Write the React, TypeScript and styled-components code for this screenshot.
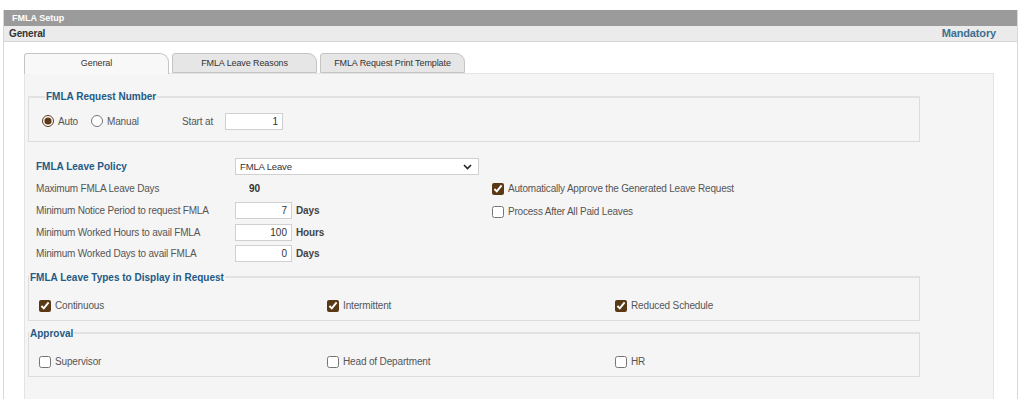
import React from 'react';
import styled, { createGlobalStyle } from 'styled-components';

const GlobalStyle = createGlobalStyle`
  body {
    margin: 0;
    background: #fff;
    font-family: "Liberation Sans", Arial, sans-serif;
    font-size: 10px;
    letter-spacing: -0.15px;
    color: #555;
  }
`;

const Page = styled.div`
  padding-top: 10px;
  height: 389px;
  overflow: hidden;
`;

const Frame = styled.div`
  margin-left: 3px;
  width: 1013px;
  height: 100%;
  border-left: 1px solid #d8d8d8;
  border-right: 1px solid #d8d8d8;
`;

const HeaderBar = styled.div`
  height: 16px;
  line-height: 16px;
  background: #9b9b9b;
  color: #fff;
  font-weight: bold;
  font-size: 9px;
  letter-spacing: 0;
  padding-left: 8px;
`;

const SubBar = styled.div`
  display: flex;
  justify-content: space-between;
  height: 15px;
  line-height: 15px;
  background: #ebebeb;
  border-bottom: 1px solid #d6d6d6;
  padding: 0 21px 0 5px;
  font-weight: bold;
  font-size: 10px;
  color: #333;
`;

const Mandatory = styled.span`
  color: #3d6f92;
  font-size: 11px;
`;

const Body = styled.div`
  padding: 11px 0 0 20px;
`;

const Tabs = styled.div`
  display: flex;
  gap: 3px;
  height: 20px;
`;

const Tab = styled.div<{ $active?: boolean }>`
  width: 143px;
  height: ${(p) => (p.$active ? '20px' : '18px')};
  line-height: 18px;
  text-align: center;
  font-size: 9px;
  letter-spacing: -0.1px;
  color: #333;
  background: ${(p) => (p.$active ? '#f8f8f8' : '#e6e6e6')};
  border: 1px solid #c4c4c4;
  border-bottom: ${(p) => (p.$active ? 'none' : '1px solid #c4c4c4')};
  border-radius: 3px 9px 0 0;
  position: relative;
  z-index: 1;
`;

const Panel = styled.div`
  width: 970px;
  height: 330px;
  background: #f5f5f5;
  border: 1px solid #e4e4e4;
  padding: 17px 0 0 3px;
  box-sizing: border-box;
`;

const Fieldset = styled.fieldset<{ $inset?: boolean }>`
  width: 892px;
  box-sizing: border-box;
  margin: 0;
  border: 1px solid #dcdcdc;
  border-top: 2px solid #e2e2e2;
  padding: ${(p) => (p.$inset ? '9px 10px 10px' : '9px 10px 8px')};
  min-width: 0;
`;

const Legend = styled.legend<{ $inset?: boolean }>`
  padding: 0 1px;
  margin-left: ${(p) => (p.$inset ? '6px' : '-10px')};
  color: #245a85;
  font-weight: bold;
  font-size: 10px;
  letter-spacing: 0;
`;

const RadioRow = styled.div`
  display: flex;
  align-items: center;
  height: 20px;
  padding-left: 3px;
`;

const Choice = styled.label<{ $width?: number }>`
  display: flex;
  align-items: center;
  gap: 4px;
  width: ${(p) => (p.$width ? `${p.$width}px` : 'auto')};
  color: #555;
`;

const Radio = styled.input.attrs({ type: 'radio' })`
  margin: 0;
  width: 12px;
  height: 12px;
  accent-color: #5a3816;
`;

const Check = styled.input.attrs({ type: 'checkbox' })`
  margin: 0;
  width: 12px;
  height: 12px;
  accent-color: #5a3816;
`;

const StartLabel = styled.span`
  margin-right: 12px;
`;

const NumInput = styled.input<{ $width?: number }>`
  width: ${(p) => p.$width ?? 57}px;
  height: 17px;
  box-sizing: border-box;
  border: 1px solid #d0d0d0;
  background: #fff;
  text-align: right;
  font-family: inherit;
  font-size: 10px;
  color: #333;
  padding: 0 4px;
`;

const PolicyArea = styled.div`
  display: flex;
  padding: 14px 0 7px 8px;
`;

const LeftCol = styled.div`
  width: 456px;
  display: flex;
  flex-direction: column;
`;

const Row = styled.div`
  display: flex;
  align-items: center;
  height: 21.75px;
`;

const RowLabel = styled.div<{ $title?: boolean }>`
  width: 199px;
  flex-shrink: 0;
  color: ${(p) => (p.$title ? '#245a85' : '#555')};
  font-weight: ${(p) => (p.$title ? 'bold' : 'normal')};
  letter-spacing: ${(p) => (p.$title ? '0' : '-0.2px')};
`;

const Value = styled.span`
  font-weight: bold;
  color: #333;
  padding-left: 14px;
`;

const Unit = styled.span`
  font-weight: bold;
  color: #444;
  margin-left: 4px;
`;

const SelectBox = styled.div`
  display: flex;
  align-items: center;
  justify-content: space-between;
  width: 244px;
  height: 17px;
  box-sizing: border-box;
  border: 1px solid #d0d0d0;
  background: #fff;
  padding: 0 6px 0 4px;
  font-size: 9.5px;
  color: #333;
`;

const RightCol = styled.div`
  display: flex;
  flex-direction: column;
  padding-top: 21px;
`;

const RightRow = styled.div`
  height: 23px;
  display: flex;
  align-items: center;
  letter-spacing: -0.2px;
`;

const Grid = styled.div`
  display: grid;
  grid-template-columns: 288px 288px 288px;
  padding-top: 8px;
`;

const Gap = styled.div`
  height: 7px;
`;

const Chevron = () => (
  <svg width="9" height="6" viewBox="0 0 9 6">
    <path d="M1 1l3.5 3.5L8 1" fill="none" stroke="#222" strokeWidth="1.6" />
  </svg>
);

export default function App() {
  return (
    <>
      <GlobalStyle />
      <Page>
        <Frame>
          <HeaderBar>FMLA Setup</HeaderBar>
          <SubBar>
            <span>General</span>
            <Mandatory>Mandatory</Mandatory>
          </SubBar>
          <Body>
            <Tabs>
              <Tab $active>General</Tab>
              <Tab>FMLA Leave Reasons</Tab>
              <Tab>FMLA Request Print Template</Tab>
            </Tabs>
            <Panel>
              <Fieldset $inset>
                <Legend $inset>FMLA Request Number</Legend>
                <RadioRow>
                  <Choice $width={49}>
                    <Radio name="num" defaultChecked /> Auto
                  </Choice>
                  <Choice $width={91}>
                    <Radio name="num" /> Manual
                  </Choice>
                  <StartLabel>Start at</StartLabel>
                  <NumInput $width={58} defaultValue="1" />
                </RadioRow>
              </Fieldset>

              <PolicyArea>
                <LeftCol>
                  <Row>
                    <RowLabel $title>FMLA Leave Policy</RowLabel>
                    <SelectBox>
                      <span>FMLA Leave</span>
                      <Chevron />
                    </SelectBox>
                  </Row>
                  <Row>
                    <RowLabel>Maximum FMLA Leave Days</RowLabel>
                    <Value>90</Value>
                  </Row>
                  <Row>
                    <RowLabel>Minimum Notice Period to request FMLA</RowLabel>
                    <NumInput defaultValue="7" />
                    <Unit>Days</Unit>
                  </Row>
                  <Row>
                    <RowLabel>Minimum Worked Hours to avail FMLA</RowLabel>
                    <NumInput defaultValue="100" />
                    <Unit>Hours</Unit>
                  </Row>
                  <Row>
                    <RowLabel>Minimum Worked Days to avail FMLA</RowLabel>
                    <NumInput defaultValue="0" />
                    <Unit>Days</Unit>
                  </Row>
                </LeftCol>
                <RightCol>
                  <RightRow>
                    <Choice>
                      <Check defaultChecked /> Automatically Approve the Generated Leave Request
                    </Choice>
                  </RightRow>
                  <RightRow>
                    <Choice>
                      <Check /> Process After All Paid Leaves
                    </Choice>
                  </RightRow>
                </RightCol>
              </PolicyArea>

              <Fieldset>
                <Legend>FMLA Leave Types to Display in Request</Legend>
                <Grid>
                  <Choice>
                    <Check defaultChecked /> Continuous
                  </Choice>
                  <Choice>
                    <Check defaultChecked /> Intermittent
                  </Choice>
                  <Choice>
                    <Check defaultChecked /> Reduced Schedule
                  </Choice>
                </Grid>
              </Fieldset>
              <Gap />
              <Fieldset>
                <Legend>Approval</Legend>
                <Grid>
                  <Choice>
                    <Check /> Supervisor
                  </Choice>
                  <Choice>
                    <Check /> Head of Department
                  </Choice>
                  <Choice>
                    <Check /> HR
                  </Choice>
                </Grid>
              </Fieldset>
            </Panel>
          </Body>
        </Frame>
      </Page>
    </>
  );
}
